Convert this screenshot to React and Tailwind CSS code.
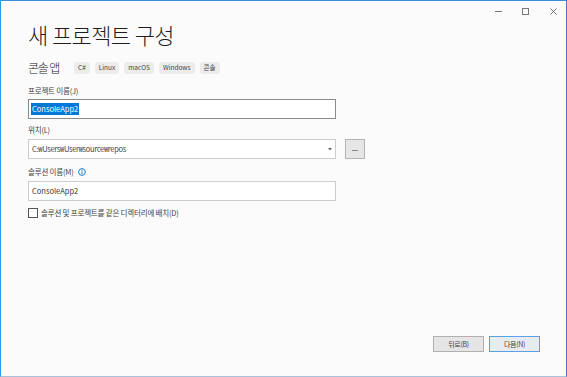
import React from "react";

const ko = { fontFamily: '"Noto Sans CJK KR", "Noto Sans", sans-serif' };

function Tag({ children }) {
  return (
    <span className="flex h-[12px] items-center rounded-[3px] bg-[#ececec] px-[4px] text-[6.5px] leading-none text-[#444]">
      {children}
    </span>
  );
}

function Label({ children }) {
  return (
    <div className="flex h-[12px] items-center text-[7.5px] tracking-[-0.2px] text-[#444]">
      {children}
    </div>
  );
}

export default function App() {
  return (
    <div
      style={ko}
      className="relative flex h-[377px] w-[567px] flex-col overflow-hidden border-l border-t border-r border-b border-l-[#2a9be3] border-t-[#3a8fdc] border-r-[#4d6fc2] border-b-[#a9c1d9] bg-[#fbfbfb]"
    >
      {/* window controls */}
      <div className="flex h-[20px] items-center justify-end gap-[21px] pr-[9px] text-[#555]">
        <svg width="7" height="7" viewBox="0 0 7 7">
          <path d="M0 3.5h7" stroke="#777" strokeWidth="1" />
        </svg>
        <svg width="7" height="7" viewBox="0 0 7 7" className="ml-[-1px]">
          <rect x="0.5" y="0.5" width="6" height="6" fill="none" stroke="#777" strokeWidth="1" />
        </svg>
        <svg width="7" height="7" viewBox="0 0 7 7">
          <path d="M0.5 0.5l6 6M6.5 0.5l-6 6" stroke="#777" strokeWidth="1" />
        </svg>
      </div>

      <div className="flex flex-1 flex-col pl-[27px]">
        <h1 className="h-[26px] text-[22px] leading-[26px] font-light tracking-[-0.6px] text-[#1e1e1e]">
          새 프로젝트 구성
        </h1>

        <div className="mt-[13px] flex h-[15px] items-center gap-[5px]">
          <span className="mr-[10px] text-[12px] leading-none font-light tracking-[-1.2px] text-[#222]">콘솔 앱</span>
          <Tag>C#</Tag>
          <Tag>Linux</Tag>
          <Tag>macOS</Tag>
          <Tag>Windows</Tag>
          <Tag>콘솔</Tag>
        </div>

        <div className="mt-[10px]">
          <Label>프로젝트 이름(J)</Label>
        </div>
        <div className="mt-[2px] flex h-[20px] w-[308px] items-center border border-[#8a8a8a] bg-white px-[2px]">
          <span className="bg-[#0078d7] px-[1px] text-[7.5px] leading-[12px] text-white">ConsoleApp2</span>
        </div>

        <div className="mt-[5px]">
          <Label>위치(L)</Label>
        </div>
        <div className="mt-[3px] flex items-center gap-[9px]">
          <div className="flex h-[20px] w-[308px] items-center justify-between border border-[#cdcdcd] bg-white pl-[3px] pr-[3px]">
            <span className="text-[7.5px] tracking-[-0.3px] text-[#444]">C:₩Users₩User₩source₩repos</span>
            <svg width="4" height="3" viewBox="0 0 4 3">
              <path d="M0 0h4L2 2.5z" fill="#666" />
            </svg>
          </div>
          <div className="flex h-[20px] w-[20px] items-center justify-center border border-[#b4b4b4] bg-[#e6e6e6]">
            <span className="mt-[3px] h-[1px] w-[6px] bg-[#888]" />
          </div>
        </div>

        <div className="mt-[7px] flex items-center gap-[4px]">
          <Label>솔루션 이름(M)</Label>
          <svg width="8" height="8" viewBox="0 0 8 8">
            <circle cx="4" cy="4" r="3.4" fill="none" stroke="#1a7fd4" strokeWidth="1" />
            <path d="M4 3.4v2.6" stroke="#1a7fd4" strokeWidth="1.1" />
            <circle cx="4" cy="2.2" r="0.6" fill="#1a7fd4" />
          </svg>
        </div>
        <div className="mt-[3px] flex h-[20px] w-[308px] items-center border border-[#cdcdcd] bg-white px-[3px]">
          <span className="text-[7.5px] text-[#333]">ConsoleApp2</span>
        </div>

        <div className="mt-[6px] flex h-[12px] items-center gap-[3px]">
          <span className="h-[10px] w-[10px] border border-[#555] bg-white" />
          <span className="text-[7.5px] tracking-[-0.2px] text-[#444]">솔루션 및 프로젝트를 같은 디렉터리에 배치(D)</span>
        </div>

        <div className="mt-auto mb-[24px] flex justify-end gap-[5px] pr-[26px]">
          <button className="flex h-[16px] w-[51px] items-center justify-center border border-[#b0b0b0] bg-[#e5e5e5] text-[7px] tracking-[-0.3px] text-[#444]">
            뒤로(B)
          </button>
          <button className="flex h-[16px] w-[51px] items-center justify-center border border-[#5fa0e0] bg-[#e8ecf1] text-[7px] tracking-[-0.3px] text-[#444]">
            다음(N)
          </button>
        </div>
      </div>
    </div>
  );
}
